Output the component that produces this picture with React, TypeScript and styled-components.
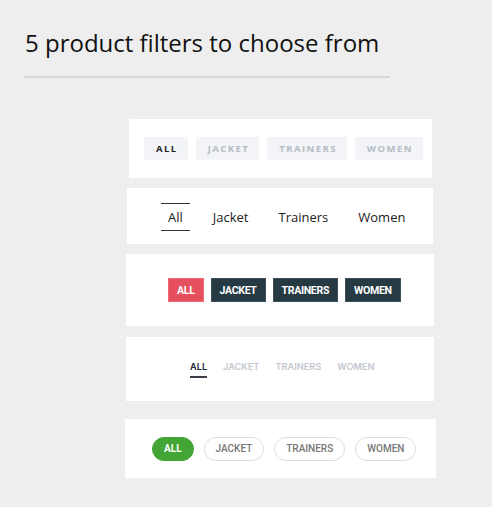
import React, { useState } from 'react';
import styled, { createGlobalStyle } from 'styled-components';

const GlobalStyle = createGlobalStyle`
  html, body {
    margin: 0;
    padding: 0;
    background: #eeeeee;
  }
  * { box-sizing: border-box; }
`;

const Page = styled.div`
  width: 492px;
  height: 507px;
  background: #eeeeee;
  overflow: hidden;
`;

const Header = styled.header`
  padding: 27px 0 0 24px;
`;

const Title = styled.h1`
  margin: 0 0 0 1px;
  font-family: "Open Sans", "Noto Sans", sans-serif;
  font-weight: 400;
  font-size: 24px;
  line-height: 32px;
  color: #111;
`;

const Rule = styled.div`
  width: 366px;
  height: 2px;
  background: #d6d6d6;
  margin-top: 17px;
`;

const Stack = styled.div`
  display: flex;
  flex-direction: column;
  align-items: flex-start;
  padding-top: 41px;
`;

const Panel = styled.section<{ $left: number; $width: number; $height: number; $pad: number; $gap: number }>`
  margin-left: ${({ $left }) => $left}px;
  width: ${({ $width }) => $width}px;
  height: ${({ $height }) => $height}px;
  margin-bottom: ${({ $gap }) => $gap}px;
  background: #ffffff;
  display: flex;
  align-items: center;
  padding-left: ${({ $pad }) => $pad}px;
`;

/* style 1: soft grey tiles */
const TileRow = styled.div`
  display: flex;
  gap: 8px;
`;

const Tile = styled.button<{ $active: boolean }>`
  border: none;
  height: 23px;
  padding: 0 10px 0 12px;
  background: #f2f4f7;
  font-family: "Open Sans", sans-serif;
  font-weight: 700;
  font-size: 9.5px;
  letter-spacing: 1.45px;
  color: ${({ $active }) => ($active ? '#1f2328' : '#b3bcc5')};
  cursor: pointer;
`;

/* style 2: lined tabs */
const LineRow = styled.div`
  display: flex;
  gap: 16px;
  margin-top: 1px;
`;

const LineTab = styled.button<{ $active: boolean }>`
  height: 28px;
  padding: 0 7px;
  background: none;
  border: none;
  border-top: 1px solid ${({ $active }) => ($active ? '#333' : 'transparent')};
  border-bottom: 1px solid ${({ $active }) => ($active ? '#333' : 'transparent')};
  font-family: "Open Sans", sans-serif;
  font-size: 13px;
  color: #1c1c1c;
  cursor: pointer;
`;

/* style 3: solid blocks */
const BlockRow = styled.div`
  display: flex;
  gap: 7px;
`;

const Block = styled.button<{ $active: boolean }>`
  height: 24px;
  padding: 0 8px;
  border: 1px solid ${({ $active }) => ($active ? '#ef6a76' : '#3b5059')};
  background: ${({ $active }) => ($active ? '#e64f5e' : '#263a43')};
  color: #fff;
  font-family: Roboto, sans-serif;
  font-weight: 700;
  font-size: 10.6px;
  letter-spacing: -0.35px;
  cursor: pointer;
`;

/* style 4: underlined text */
const TextRow = styled.div`
  display: flex;
  gap: 16px;
  margin-top: 1px;
`;

const TextTab = styled.button<{ $active: boolean }>`
  padding: 0 0 4px;
  background: none;
  border: none;
  border-bottom: 2px solid ${({ $active }) => ($active ? '#3a3d45' : 'transparent')};
  font-family: Inter, sans-serif;
  font-weight: 600;
  font-size: 9.2px;
  color: ${({ $active }) => ($active ? '#1d2230' : '#c3c7cf')};
  cursor: pointer;
`;

/* style 5: pills */
const PillRow = styled.div`
  display: flex;
  gap: 10px;
`;

const Pill = styled.button<{ $active: boolean }>`
  height: 24px;
  padding: 0 11px;
  border-radius: 12px;
  border: 1px solid ${({ $active }) => ($active ? '#42a535' : '#dcdcdc')};
  background: ${({ $active }) => ($active ? '#42a535' : '#fff')};
  color: ${({ $active }) => ($active ? '#fff' : '#777')};
  font-family: Roboto, sans-serif;
  font-weight: ${({ $active }) => ($active ? 700 : 500)};
  font-size: 10px;
  cursor: pointer;
`;

const upper = ['ALL', 'JACKET', 'TRAINERS', 'WOMEN'];
const title = ['All', 'Jacket', 'Trainers', 'Women'];

export default function App() {
  const [sel, setSel] = useState([0, 0, 0, 0, 0]);
  const pick = (row: number, i: number) =>
    setSel((s) => s.map((v, r) => (r === row ? i : v)));

  return (
    <Page>
      <GlobalStyle />
      <Header>
        <Title>5 product filters to choose from</Title>
        <Rule />
      </Header>
      <Stack>
        <Panel $left={129} $width={303} $height={59} $pad={15} $gap={10}>
          <TileRow>
            {upper.map((t, i) => (
              <Tile key={t} $active={sel[0] === i} onClick={() => pick(0, i)}>{t}</Tile>
            ))}
          </TileRow>
        </Panel>
        <Panel $left={127} $width={306} $height={56} $pad={34} $gap={10}>
          <LineRow>
            {title.map((t, i) => (
              <LineTab key={t} $active={sel[1] === i} onClick={() => pick(1, i)}>{t}</LineTab>
            ))}
          </LineRow>
        </Panel>
        <Panel $left={126} $width={308} $height={72} $pad={42} $gap={11}>
          <BlockRow>
            {upper.map((t, i) => (
              <Block key={t} $active={sel[2] === i} onClick={() => pick(2, i)}>{t}</Block>
            ))}
          </BlockRow>
        </Panel>
        <Panel $left={126} $width={308} $height={64} $pad={64} $gap={18}>
          <TextRow>
            {upper.map((t, i) => (
              <TextTab key={t} $active={sel[3] === i} onClick={() => pick(3, i)}>{t}</TextTab>
            ))}
          </TextRow>
        </Panel>
        <Panel $left={125} $width={311} $height={59} $pad={27} $gap={0}>
          <PillRow>
            {upper.map((t, i) => (
              <Pill key={t} $active={sel[4] === i} onClick={() => pick(4, i)}>{t}</Pill>
            ))}
          </PillRow>
        </Panel>
      </Stack>
    </Page>
  );
}
